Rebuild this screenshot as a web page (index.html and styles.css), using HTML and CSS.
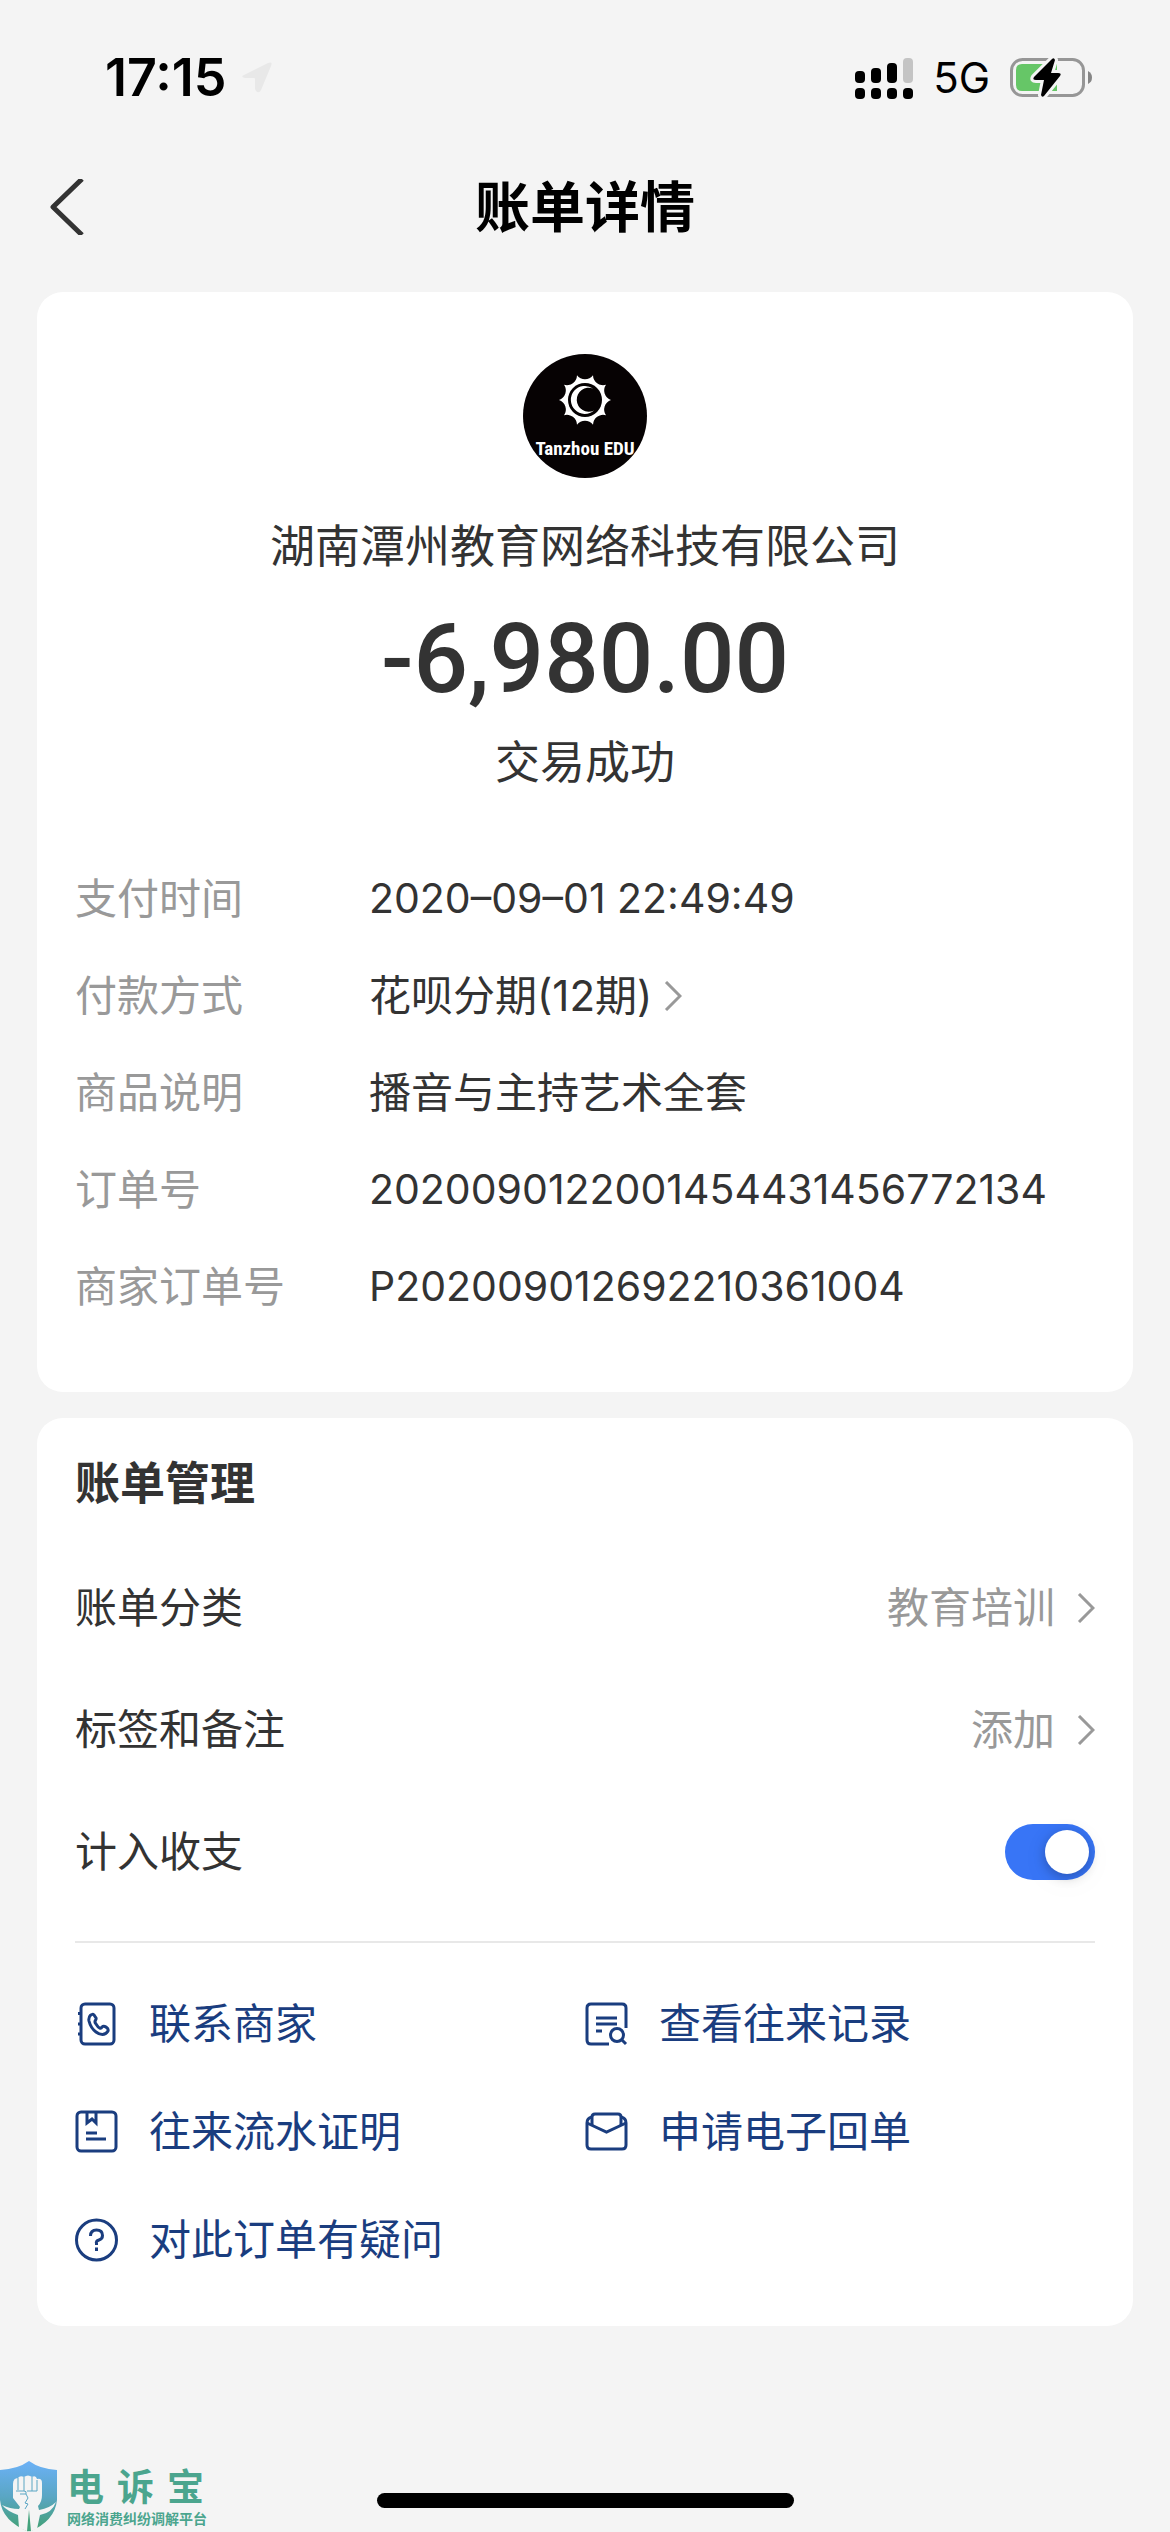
FILE: index.html
```html
<!DOCTYPE html>
<html lang="zh-CN">
<head>
<meta charset="utf-8">
<meta name="viewport" content="width=device-width, initial-scale=1">
<title>账单详情</title>
<link rel="stylesheet" href="styles.css">
</head>
<body>
<div class="status-bar">
  <div class="status-left">
    <time class="clock">17:15</time>
    <svg class="location" width="30" height="32" viewBox="0 0 30 32" aria-hidden="true"><path d="M2 13 26 1Q31-1 29 4L19 28Q17 32 14 29L13 27V17Q13 16 12 16H3Q-2 15 2 13Z" fill="#e8e8e8"/></svg>
  </div>
  <div class="status-right">
    <svg width="58" height="41" viewBox="0 0 58 41" aria-hidden="true">
      <rect x="0" y="13" width="10" height="12" rx="4"/><rect x="16" y="10" width="10" height="15" rx="4"/><rect x="32" y="5" width="10" height="20" rx="4"/><rect x="48" y="0" width="10" height="25" rx="4" fill="#c4c4c4"/>
      <rect x="0" y="30" width="10" height="11" rx="4"/><rect x="16" y="30" width="10" height="11" rx="4"/><rect x="32" y="30" width="10" height="11" rx="4"/><rect x="48" y="30" width="10" height="11" rx="4"/>
    </svg>
    <span class="network">5G</span>
    <svg width="82" height="42" viewBox="0 0 82 42" aria-hidden="true">
      <rect x="1.5" y="2.5" width="72" height="36" rx="11" fill="none" stroke="#969696" stroke-width="3"/>
      <path d="M78 14Q82 16 82 20.500T78 27Z" fill="#858585"/>
      <path d="M12 7H47V34H12Q6 34 6 28V13Q6 7 12 7Z" fill="#66c667"/>
      <path d="M42 2 24 20Q22 23 26 23H34L31 38Q32 41 34 39L50 19Q52 16 48 16H41L45 3Q44 0 42 2Z" stroke="#f4f4f4" stroke-width="6"/>
      <path d="M42 2 24 20Q22 23 26 23H34L31 38Q32 41 34 39L50 19Q52 16 48 16H41L45 3Q44 0 42 2Z"/>
    </svg>
  </div>
</div>

<header class="nav">
  <button class="back" type="button" aria-label="返回"><svg width="36" height="56" viewBox="0 0 36 56"><path d="M33 0 4 28 33 56" fill="none" stroke="#333" stroke-width="5" stroke-linejoin="round"/></svg></button>
  <h1 class="nav-title">账单详情</h1>
</header>

<main class="content">
  <section class="card summary">
    <div class="merchant-logo">
      <svg width="54" height="54" viewBox="-27 -27 54 54" aria-hidden="true">
        <path fill="#fff" d="M26 0A10 10 0 0 0 21 15.300A10 10 0 0 0 8 24.700A10 10 0 0 0-8 24.700A10 10 0 0 0-21 15.300A10 10 0 0 0-26 0A10 10 0 0 0-21-15.300A10 10 0 0 0-8-24.700A10 10 0 0 0 8-24.700A10 10 0 0 0 21-15.300A10 10 0 0 0 26 0Z"/>
        <circle r="17" fill="#060203"/>
        <path fill="#fff" d="M9 10.500A14 14 0 1 1 8-11.500A12 12 0 1 0 9 10.500Z"/>
      </svg>
      <span class="merchant-brand">Tanzhou EDU</span>
    </div>
    <p class="merchant-name">湖南潭州教育网络科技有限公司</p>
    <p class="amount">-6,980.00</p>
    <p class="trade-state">交易成功</p>
    <dl class="details">
      <dt>支付时间</dt><dd class="number">2020–09–01 22:49:49</dd>
      <dt>付款方式</dt><dd><a class="detail-link" href="#installment">花呗分期(12期)<svg class="chevron" width="18" height="30" viewBox="0 0 18 30"><path d="M2 1 16 15 2 29"/></svg></a></dd>
      <dt>商品说明</dt><dd>播音与主持艺术全套</dd>
      <dt>订单号</dt><dd class="number">2020090122001454431456772134</dd>
      <dt>商家订单号</dt><dd class="number">P202009012692210361004</dd>
    </dl>
  </section>

  <section class="card manage">
    <h2 class="manage-title">账单管理</h2>
    <a class="row" href="#category"><span>账单分类</span><span class="row-value">教育培训<svg class="chevron" width="18" height="30" viewBox="0 0 18 30"><path d="M2 1 16 15 2 29"/></svg></span></a>
    <a class="row" href="#remark"><span>标签和备注</span><span class="row-value">添加<svg class="chevron" width="18" height="30" viewBox="0 0 18 30"><path d="M2 1 16 15 2 29"/></svg></span></a>
    <div class="row"><label for="count-in">计入收支</label><input class="switch" id="count-in" type="checkbox" role="switch" checked></div>
    <hr class="divider">
    <nav class="links">
      <a class="link" href="#contact"><svg class="icon" width="44" height="44" viewBox="0 0 44 44"><rect x="6" y="2" width="33" height="40" rx="4"/><path d="M3 11.500H7M3 22H7M3 32H7"/><path d="M14 19C13 14 17 11 19 13L21 16C22 18 18 19 21 22C24 27 26 27 27 25C29 23 34 26 33 29C30 34 25 33 21 30C17 27 15 23 14 19Z"/></svg>联系商家</a>
      <a class="link" href="#records"><svg class="icon" width="44" height="44" viewBox="0 0 44 44"><path d="M24 42H6Q2 42 2 38V6Q2 2 6 2H37Q41 2 41 6V26"/><path d="M11 16H32M11 22H32M11 29H17"/><circle cx="32" cy="33" r="6.500"/><path d="M36.500 37.500 41 42"/></svg>查看往来记录</a>
      <a class="link" href="#statement"><svg class="icon" width="44" height="44" viewBox="0 0 44 44"><rect x="2" y="2" width="39" height="39" rx="4"/><path d="M12 2V13L17 9 21 13V2M11 23H22M11 29H31"/></svg>往来流水证明</a>
      <a class="link" href="#receipt"><svg class="icon" width="44" height="44" viewBox="0 0 44 44"><path d="M7 15V7Q7 4 10 4H33Q36 4 36 7V15"/><path d="M7 7Q2 8 2 13V35Q2 39 6 39H37Q41 39 41 35V13Q41 8 36 7"/><path d="M2 13 21.500 22 41 13"/></svg>申请电子回单</a>
      <a class="link" href="#question"><svg class="icon" width="44" height="44" viewBox="0 0 44 44"><circle cx="21.500" cy="22" r="20"/><path d="M15.500 18Q15.500 12 21.500 12T27.500 17.500Q27.500 21 24 22T21.500 25.500V27M21.500 29.500V33"/></svg>对此订单有疑问</a>
    </nav>
  </section>
</main>

<footer class="home-area"><div class="home-indicator"></div></footer>

<aside class="watermark">
  <svg width="58" height="72" viewBox="0 0 58 72" aria-hidden="true">
    <defs><linearGradient id="shield" x1="0" y1="0" x2="0" y2="1"><stop offset="0" stop-color="#6bb1f7"/><stop offset=".5" stop-color="#5aa6c4"/><stop offset="1" stop-color="#40a070"/></linearGradient></defs>
    <path fill="url(#shield)" d="M29 1Q40 9 57 10V40Q55 61 29 72Q2 61 0 40V10Q18 9 29 1Z"/>
    <path fill="#f4f4f4" d="M13 24Q13 18 18 18Q20 15 24 17Q28 14 32 17Q36 15 37 19Q42 18 42 23V35Q42 42 38 46L39 50Q50 48 56 42Q52 53 40 55L37 69 29 72 19 68 18 55Q7 51 2 45Q10 49 19 49L20 47 13 38Z"/>
    <path fill="none" stroke="#5aa6c4" d="M18 18V30M24 17V31M32 17V31M37 20V31M16 31H24Q27 31 26 34H20M26 34 28 38 25 43 28 44 25 49M27 31H37"/>
    <path fill="#43a27c" d="M29 50 31 71H27Z"/>
  </svg>
  <div class="watermark-text">
    <p class="watermark-name"><span>电</span><span>诉</span><span>宝</span></p>
    <p class="watermark-sub">网络消费纠纷调解平台</p>
  </div>
</aside>
</body>
</html>
```
FILE: styles.css
```css
* { box-sizing: border-box; }

body {
  margin: 0;
  min-height: 100vh;
  position: relative;
  display: flex;
  flex-direction: column;
  background: #f4f4f4;
  color: #333;
  font-family: Inter, "Noto Sans CJK SC", sans-serif;
  font-size: 42px;
  line-height: 60px;
}

h1, h2, p, dl, dd { margin: 0; }
a { color: inherit; text-decoration: none; }
svg { flex: none; }

.status-bar {
  display: flex;
  justify-content: space-between;
  align-items: center;
  height: 156px;
  padding: 0 78px 0 105px;
  color: #000;
}
.status-left, .status-right { display: flex; align-items: center; }
.status-left { gap: 16px; }
.status-right { gap: 20px; }
.clock { font-size: 52px; font-weight: 600; }
.network { font-size: 42px; }

.nav {
  display: grid;
  grid-template-columns: 1fr auto 1fr;
  align-items: center;
  height: 102px;
  padding: 0 49px;
}
.back {
  display: flex;
  justify-self: start;
  padding: 0;
  border: 0;
  background: none;
}
.nav-title { color: #000; font-size: 55px; font-weight: 700; }

.content {
  display: flex;
  flex-direction: column;
  gap: 26px;
  padding: 34px 37px 0;
}
.card { padding: 0 38px; border-radius: 26px; background: #fff; }

.summary {
  display: flex;
  flex-direction: column;
  align-items: center;
  padding-top: 62px;
  padding-bottom: 57px;
}
.merchant-logo {
  display: flex;
  flex-direction: column;
  align-items: center;
  width: 124px;
  height: 124px;
  padding-top: 19px;
  border-radius: 50%;
  background: #060203;
  overflow: hidden;
}
.merchant-brand {
  color: #fff;
  font-family: "Liberation Sans Narrow", "Roboto Condensed", "Liberation Sans", sans-serif;
  font-size: 19px;
  font-weight: 700;
  line-height: 44px;
  white-space: nowrap;
}
.merchant-name { margin-top: 39px; font-size: 45px; }
.amount {
  margin-top: 32px;
  font-family: Roboto, sans-serif;
  font-size: 96px;
  font-weight: 500;
  line-height: 100px;
}
.trade-state { margin-top: 24px; font-size: 45px; }
.details {
  display: grid;
  grid-template-columns: 294px 1fr;
  align-self: stretch;
  margin-top: 57px;
  line-height: 97px;
}
.details dt { color: #999; }
.details .number { font-size: 41px; }
.detail-link { display: inline-flex; align-items: center; gap: 12px; }
.chevron { fill: none; stroke: #999; stroke-width: 3px; }

.manage { padding-top: 36px; padding-bottom: 32px; }
.manage-title { margin-bottom: 33px; font-size: 45px; font-weight: 700; }
.row {
  display: flex;
  justify-content: space-between;
  align-items: center;
  height: 122px;
}
.row-value { display: flex; align-items: center; gap: 22px; color: #999; }
.switch {
  appearance: none;
  display: flex;
  align-items: center;
  justify-content: flex-end;
  width: 90px;
  height: 56px;
  margin: 0;
  padding: 6px;
  border-radius: 28px;
  background: #3875f6;
}
.switch::before {
  content: "";
  width: 44px;
  height: 44px;
  border-radius: 50%;
  background: #fff;
  box-shadow: 0 3px 12px rgba(0, 0, 0, .25), 0 6px 36px rgba(0, 0, 0, .04);
}
.switch:not(:checked) { justify-content: flex-start; background: #ccc; }
.divider { margin: 28px 0 27px; border: 0; border-top: 2px solid #e8e8e8; }
.links { display: grid; grid-template-columns: 1fr 1fr; }
.link {
  display: flex;
  align-items: center;
  gap: 30px;
  height: 108px;
  color: #1a3d7f;
}
.icon { fill: none; stroke: #1a3d7f; stroke-width: 3px; }

.home-area { display: flex; justify-content: center; margin-top: auto; padding: 40px 0 24px; }
.home-indicator { width: 417px; height: 15px; border-radius: 8px; background: #000; }

.watermark {
  position: absolute;
  left: 0;
  bottom: 0;
  display: flex;
  align-items: flex-end;
  gap: 9px;
  color: #4ba58e;
  font-weight: 700;
}
.watermark-name { display: flex; gap: 13px; font-size: 37px; line-height: 36px; }
.watermark-sub { font-size: 14px; line-height: 26px; }
```
